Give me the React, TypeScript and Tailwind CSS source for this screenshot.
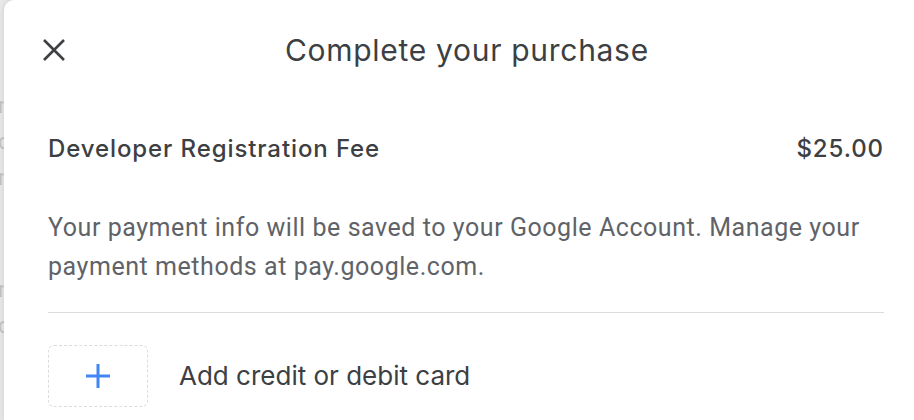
import React from "react";

export default function App() {
  return (
    <div className="flex h-[420px] w-[914px] overflow-hidden bg-[#e9e9e9]">
      <div
        className="w-[4px] shrink-0 overflow-hidden pt-[88px] text-[22px] leading-[36px] text-[#c4c4c4]"
        style={{ fontFamily: "Roboto, sans-serif" }}
      >
        <div className="ml-[-2px]">n</div>
        <div className="ml-[-2px]">c</div>
        <div className="ml-[-2px]">n</div>
        <div className="ml-[-2px] mt-[76px]">n</div>
        <div className="ml-[-2px]">c</div>
      </div>
      <div className="flex flex-1 flex-col rounded-tl-[10px] bg-white shadow-[0_0_6px_rgba(0,0,0,0.12)]">
        <div className="flex h-[100px] items-center">
          <div className="flex w-[100px] justify-center">
            <svg width="24" height="24" viewBox="0 0 24 24">
              <path d="M2 2 L22 22 M22 2 L2 22" stroke="#3c4043" strokeWidth="2.6" fill="none" />
            </svg>
          </div>
          <div
            className="ml-[181px] text-[30px] leading-none tracking-[0.7px] text-[#3c4043]"
            style={{ fontFamily: "Inter, sans-serif" }}
          >
            Complete your purchase
          </div>
        </div>
        <div className="flex flex-col pl-[44px] pr-[30px]">
          <div
            className="mt-[34px] flex items-center justify-between text-[24px] leading-[30px] font-medium tracking-[0.9px] text-[#3c4043]"
            style={{ fontFamily: "Inter, sans-serif" }}
          >
            <span>Developer Registration Fee</span>
            <span>$25.00</span>
          </div>
          <p
            className="mt-[44px] text-[25px] leading-[39px] tracking-[0.55px] text-[#5f6368]"
            style={{ fontFamily: "Roboto, sans-serif" }}
          >
            Your payment info will be saved to your Google Account. Manage your payment methods at pay.google.com.
          </p>
          <div className="mt-[26px] h-px bg-[#dadce0]" />
          <div className="mt-[32px] flex items-center">
            <div className="flex h-[62px] w-[100px] items-center justify-center rounded-[6px] border border-dashed border-[#dadce0]">
              <svg width="26" height="26" viewBox="0 0 26 26">
                <path d="M13 1 V25 M1 13 H25" stroke="#4285f4" strokeWidth="3" fill="none" />
              </svg>
            </div>
            <span
              className="ml-[31px] text-[26px] leading-[32px] text-[#3c4043]"
              style={{ fontFamily: "Inter, sans-serif" }}
            >
              Add credit or debit card
            </span>
          </div>
        </div>
      </div>
    </div>
  );
}
